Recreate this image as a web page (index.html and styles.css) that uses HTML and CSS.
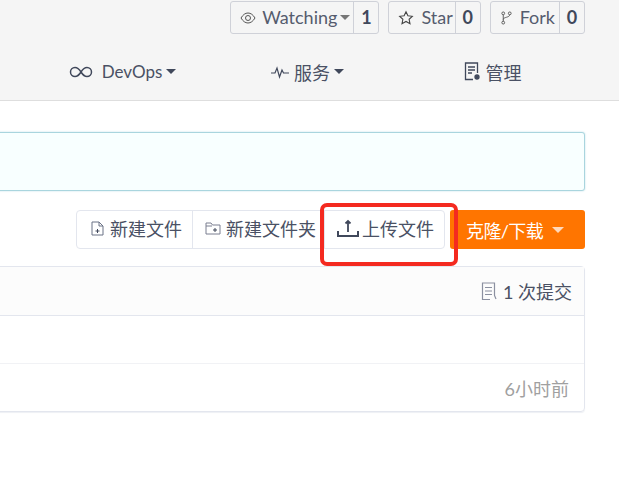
FILE: index.html
```html
<!DOCTYPE html>
<html lang="zh-CN">

<head>
  <meta charset="UTF-8">
  <meta name="viewport" content="width=device-width, initial-scale=1.0">
  <title>上传文件</title>
  <link rel="stylesheet" href="styles.css">
</head>

<body>
  <!-- 顶部 -->
  <div class="header">
    <div class="social">
      <div class="social-btn">
        <span class="social-label social-label-watch">
          <svg class="icon" width="16" height="16" viewBox="0 0 16 16" fill="none" stroke="#555" stroke-width="1"><path d="M1 8c2-3.300 4.300-5 7-5s5 1.700 7 5c-2 3.300-4.300 5-7 5s-5-1.700-7-5z"/><circle cx="8" cy="8" r="2.500"/></svg>
          Watching <span class="caret"></span>
        </span>
        <span class="social-count">1</span>
      </div>
      <div class="social-btn">
        <span class="social-label social-label-star">
          <svg class="icon" width="16" height="16" viewBox="0 0 16 16" fill="none" stroke="#444" stroke-width="1.100"><path d="M8 1.800l1.900 4 4.400.5-3.200 3 .9 4.400L8 11.500l-4 2.200.9-4.400-3.200-3 4.400-.5z"/></svg>
          Star
        </span>
        <span class="social-count">0</span>
      </div>
      <div class="social-btn">
        <span class="social-label">
          <svg class="icon" width="13" height="16" viewBox="0 0 14 16" fill="none" stroke="#555" stroke-width="1"><circle cx="3.500" cy="3" r="1.500"/><circle cx="10.500" cy="3" r="1.500"/><circle cx="3.500" cy="13" r="1.500"/><path d="M3.500 4.500v7M10.500 4.500c0 3-7 2.500-7 5"/></svg>
          Fork
        </span>
        <span class="social-count">0</span>
      </div>
    </div>
    <div class="nav">
      <div class="nav-item">
        <svg class="icon" width="24" height="12" viewBox="0 0 24 12" fill="none" stroke="#40485b" stroke-width="1.500"><path d="M12 6C10 2.800 8.300 1.500 6 1.500a4.500 4.500 0 0 0 0 9c2.300 0 4-1.300 6-4.500s3.700-4.500 6-4.500a4.500 4.500 0 0 1 0 9c-2.300 0-4-1.300-6-4.500z"/></svg>
        <span class="nav-devops">DevOps</span><span class="caret"></span>
      </div>
      <div class="nav-item">
        <svg class="icon" width="18" height="14" viewBox="0 0 18 14" fill="none" stroke="#40485b" stroke-width="1.200"><path d="M0 8h4l2-5 2.500 9L11 5l1.500 3H18"/></svg>
        服务<span class="caret"></span>
      </div>
      <div class="nav-item">
        <svg class="icon" width="17" height="19" viewBox="0 0 17 19" fill="none" stroke="#40485b" stroke-width="1.300"><path d="M9 17.500H1.500V1h12v10M4 5h7M4 8h7M4 11h4"/><circle cx="13" cy="15" r="2" fill="#40485b"/></svg>
        管理
      </div>
    </div>
  </div>

  <div class="content">
    <div class="notice"></div>

    <div class="toolbar">
      <div class="file-group">
        <div class="file-btn">
          <svg class="icon" width="13" height="15" viewBox="0 0 13 15" fill="none" stroke="#6b7286" stroke-width="1"><path d="M1 1h7l4 4v9H1zM8 1v4h4"/><path d="M4.500 10h4M6.500 8v4" stroke="#40485b"/></svg>
          新建文件
        </div>
        <div class="file-btn file-btn-folder">
          <svg class="icon" width="16" height="14" viewBox="0 0 16 14" fill="none" stroke="#7b7f90" stroke-width="1"><path d="M1 2h5l1.500 2H15v9H1zM1 5h6"/><path d="M8 9h4M10 7v4" stroke="#40485b"/></svg>
          新建文件夹
        </div>
        <div class="file-btn file-btn-upload">
          <svg class="icon" width="22" height="18" viewBox="0 0 22 18" fill="none" stroke="#40485b" stroke-width="2"><path d="M1 12v5h20v-5"/><path d="M11 13V2M8.500 4.500L11 2l2.500 2.500" stroke-width="1.800"/></svg>
          上传文件
        </div>
      </div>
      <div class="clone-btn">克隆/下载<span class="caret caret-white"></span></div>
    </div>

    <div class="file-table">
      <div class="table-head">
        <svg class="icon" width="16" height="19" viewBox="0 0 16 19" fill="none" stroke="#8b90a0" stroke-width="1.200"><path d="M9 17.500H1.500V1h12v12.500L15 17M4 5.500h7M4 9h7M4 12.500h7"/></svg>
        1 次提交
      </div>
      <div class="table-row"></div>
      <div class="table-row table-row-last">6小时前</div>
    </div>
  </div>

  <!-- 截图上的红框标注 -->
  <div class="mark"></div>
</body>

</html>
```

FILE: styles.css
```css
html,
body {
  height: 100%;
  overflow: hidden;
}

body {
  margin: 0;
  background: #fff;
  color: #4a5164;
  font-family: Lato, "Noto Sans CJK SC", sans-serif;
  font-size: 18px;
  position: relative;
}

.icon {
  flex: none;
}

.caret {
  display: inline-block;
  width: 0;
  height: 0;
  border-left: 5px solid transparent;
  border-right: 5px solid transparent;
  border-top: 5px solid #40485b;
}

.caret-white {
  border-top-color: #ffd9bb;
  border-left-width: 6px;
  border-right-width: 6px;
  border-top-width: 6px;
  margin-left: 9px;
}

.header {
  height: 100px;
  background: #f5f5f5;
  border-bottom: 1px solid #dedede;
}

.social {
  display: flex;
  justify-content: flex-end;
  gap: 9px;
  padding: 1px 34px 0 0;
}

.social-btn {
  display: flex;
  height: 31px;
  border: 1px solid #cfd1d8;
  border-radius: 3px;
  line-height: 31px;
  color: #555c6e;
}

.social-label {
  display: flex;
  align-items: center;
  gap: 7px;
  padding: 0 4px 0 9px;
}

.social-label-watch {
  gap: 6px;
  padding-right: 3px;
}

.social-label-star {
  padding-right: 2px;
}

.social-label .caret {
  border-top-color: #767676;
  margin-left: -3px;
}

.social-count {
  width: 24px;
  border-left: 1px solid #cfd1d8;
  font-weight: 700;
  text-align: center;
  color: #40485b;
}

.nav {
  display: grid;
  grid-template-columns: repeat(3, 185px);
  margin: 21px 0 0 30px;
}

.nav-item {
  display: flex;
  align-items: center;
  justify-content: center;
  gap: 5px;
  height: 33px;
}

.nav-item .caret {
  margin-left: -1px;
}

.nav-devops {
  margin-left: 4px;
  font-size: 17px;
}

.content {
  margin: 31px 34px 0 -4px;
}

.notice {
  height: 57px;
  background: #f8ffff;
  border: 1px solid #a9d5de;
  border-radius: 3px;
  box-shadow: 0 0 2px #bcdde6;
}

.toolbar {
  display: flex;
  justify-content: flex-end;
  gap: 5px;
  margin-top: 19px;
}

.file-group {
  display: flex;
  height: 37px;
  border: 1px solid #e3e6ee;
  border-radius: 4px;
  background: #fff;
}

.file-btn {
  display: flex;
  align-items: center;
  gap: 6px;
  padding: 0 10px 3px 14px;
  border-left: 1px solid #e3e6ee;
}

.file-btn:first-child {
  border-left: none;
}

.file-btn-folder {
  gap: 5px;
  padding: 0 8px 3px 12px;
}

.file-btn-upload {
  gap: 3px;
  padding: 0 10px 3px 12px;
}

.clone-btn {
  display: flex;
  align-items: center;
  width: 119px;
  height: 39px;
  padding-left: 16px;
  border-radius: 3px;
  background: #ff7500;
  color: #fff;
  letter-spacing: -0.6px;
}

.file-table {
  margin-top: 17px;
  border: 1px solid #e3e6ee;
  border-radius: 4px;
  box-shadow: 0 1px 1px #eef0f4;
}

.table-head {
  display: flex;
  align-items: center;
  justify-content: flex-end;
  gap: 6px;
  height: 48px;
  padding-right: 12px;
  background: #fcfcfc;
  border-bottom: 1px solid #e3e6ee;
}

.table-row {
  display: flex;
  align-items: center;
  justify-content: flex-end;
  height: 47px;
  padding-right: 15px;
  border-bottom: 1px solid #f1f2f5;
  color: #a0a0a0;
}

.table-row-last {
  border-bottom: none;
}

.mark {
  position: absolute;
  left: 320px;
  top: 203px;
  width: 130px;
  height: 55px;
  border: 4px solid #f42a20;
  border-radius: 7px;
}
```
